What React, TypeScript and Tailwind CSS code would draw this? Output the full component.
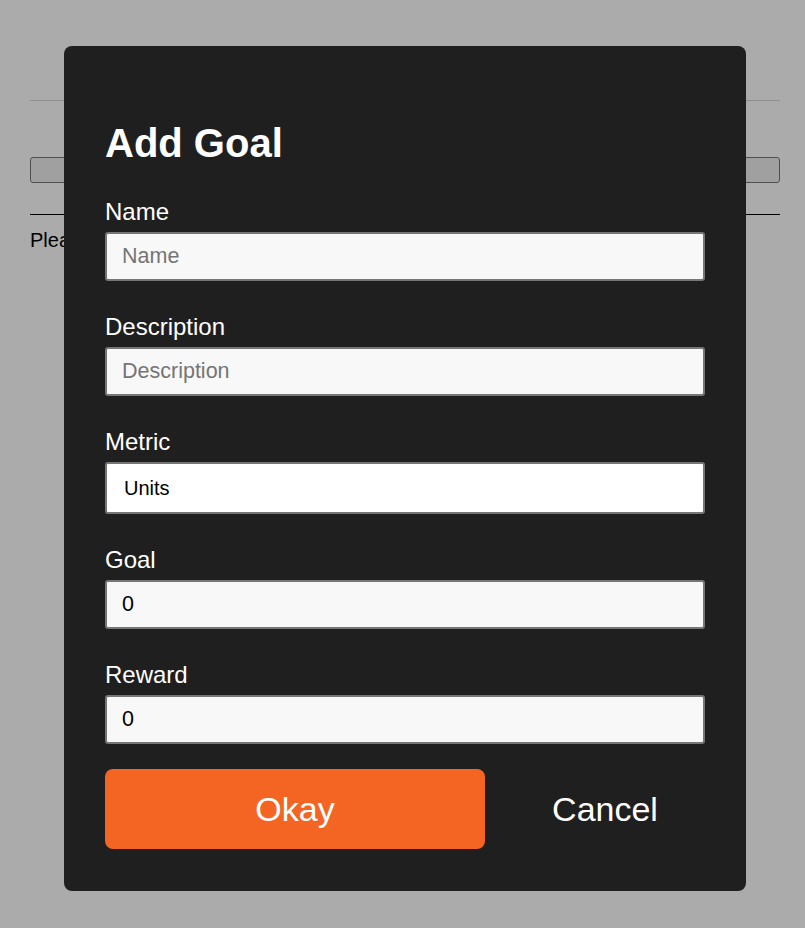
import { useState } from 'react';

interface FieldProps {
  label: string;
  value?: string;
  placeholder?: string;
  onChange?: (v: string) => void;
}

function Field({ label, value, placeholder, onChange }: FieldProps) {
  return (
    <label className="block">
      <span className="block text-[24px] leading-[28px] text-white mb-[6px]">{label}</span>
      <input
        className="block w-full h-[49px] rounded-[3px] border-2 border-[#767676] bg-[#f8f8f8] px-[15px] text-[21.5px] text-black placeholder:text-[#757575] outline-none"
        value={value}
        placeholder={placeholder}
        onChange={(e) => onChange?.(e.target.value)}
      />
    </label>
  );
}

export default function App() {
  const [name, setName] = useState('');
  const [description, setDescription] = useState('');
  const [goal, setGoal] = useState('0');
  const [reward, setReward] = useState('0');

  return (
    <div className="relative w-[805px] h-[928px] overflow-hidden bg-white font-['Liberation_Sans',Arial,sans-serif]">
      {/* page behind the dialog */}
      <div className="pl-[30px] pr-[25px] pt-[100px]">
        <div className="h-px bg-[#d6d6d6]" />
        <div className="mt-[56px] h-[26px] rounded-[3px] border border-[#767676] bg-[#efefef]" />
        <div className="mt-[31px] h-px bg-black" />
        <p className="mt-[10px] text-[20px] text-black">Please add a goal to get started.</p>
      </div>

      {/* overlay */}
      <div className="absolute inset-0 bg-black/[0.33] pt-[46px] pl-[64px]">
        <div className="w-[682px] h-[845px] rounded-lg bg-[#1f1f1f] px-[41px] pt-[74px] pb-[42px]">
          <h2 className="text-[40px] leading-[46px] font-bold text-white">Add Goal</h2>

          <div className="mt-[32px] flex flex-col gap-[32px]">
            <Field label="Name" placeholder="Name" value={name} onChange={setName} />
            <Field label="Description" placeholder="Description" value={description} onChange={setDescription} />
            <label className="block">
              <span className="block text-[24px] leading-[28px] text-white mb-[6px]">Metric</span>
              <div className="flex items-center w-full h-[52px] rounded-[3px] border-2 border-[#767676] bg-white px-[17px] text-[20px] text-black">
                Units
              </div>
            </label>
            <Field label="Goal" value={goal} onChange={setGoal} />
            <Field label="Reward" value={reward} onChange={setReward} />
          </div>

          <div className="mt-[25px] flex">
            <button className="w-[380px] h-[80px] rounded-lg bg-[#f46524] text-white text-[34px]">Okay</button>
            <button className="flex-1 ml-[20px] h-[80px] text-white text-[34px]">Cancel</button>
          </div>
        </div>
      </div>
    </div>
  );
}
